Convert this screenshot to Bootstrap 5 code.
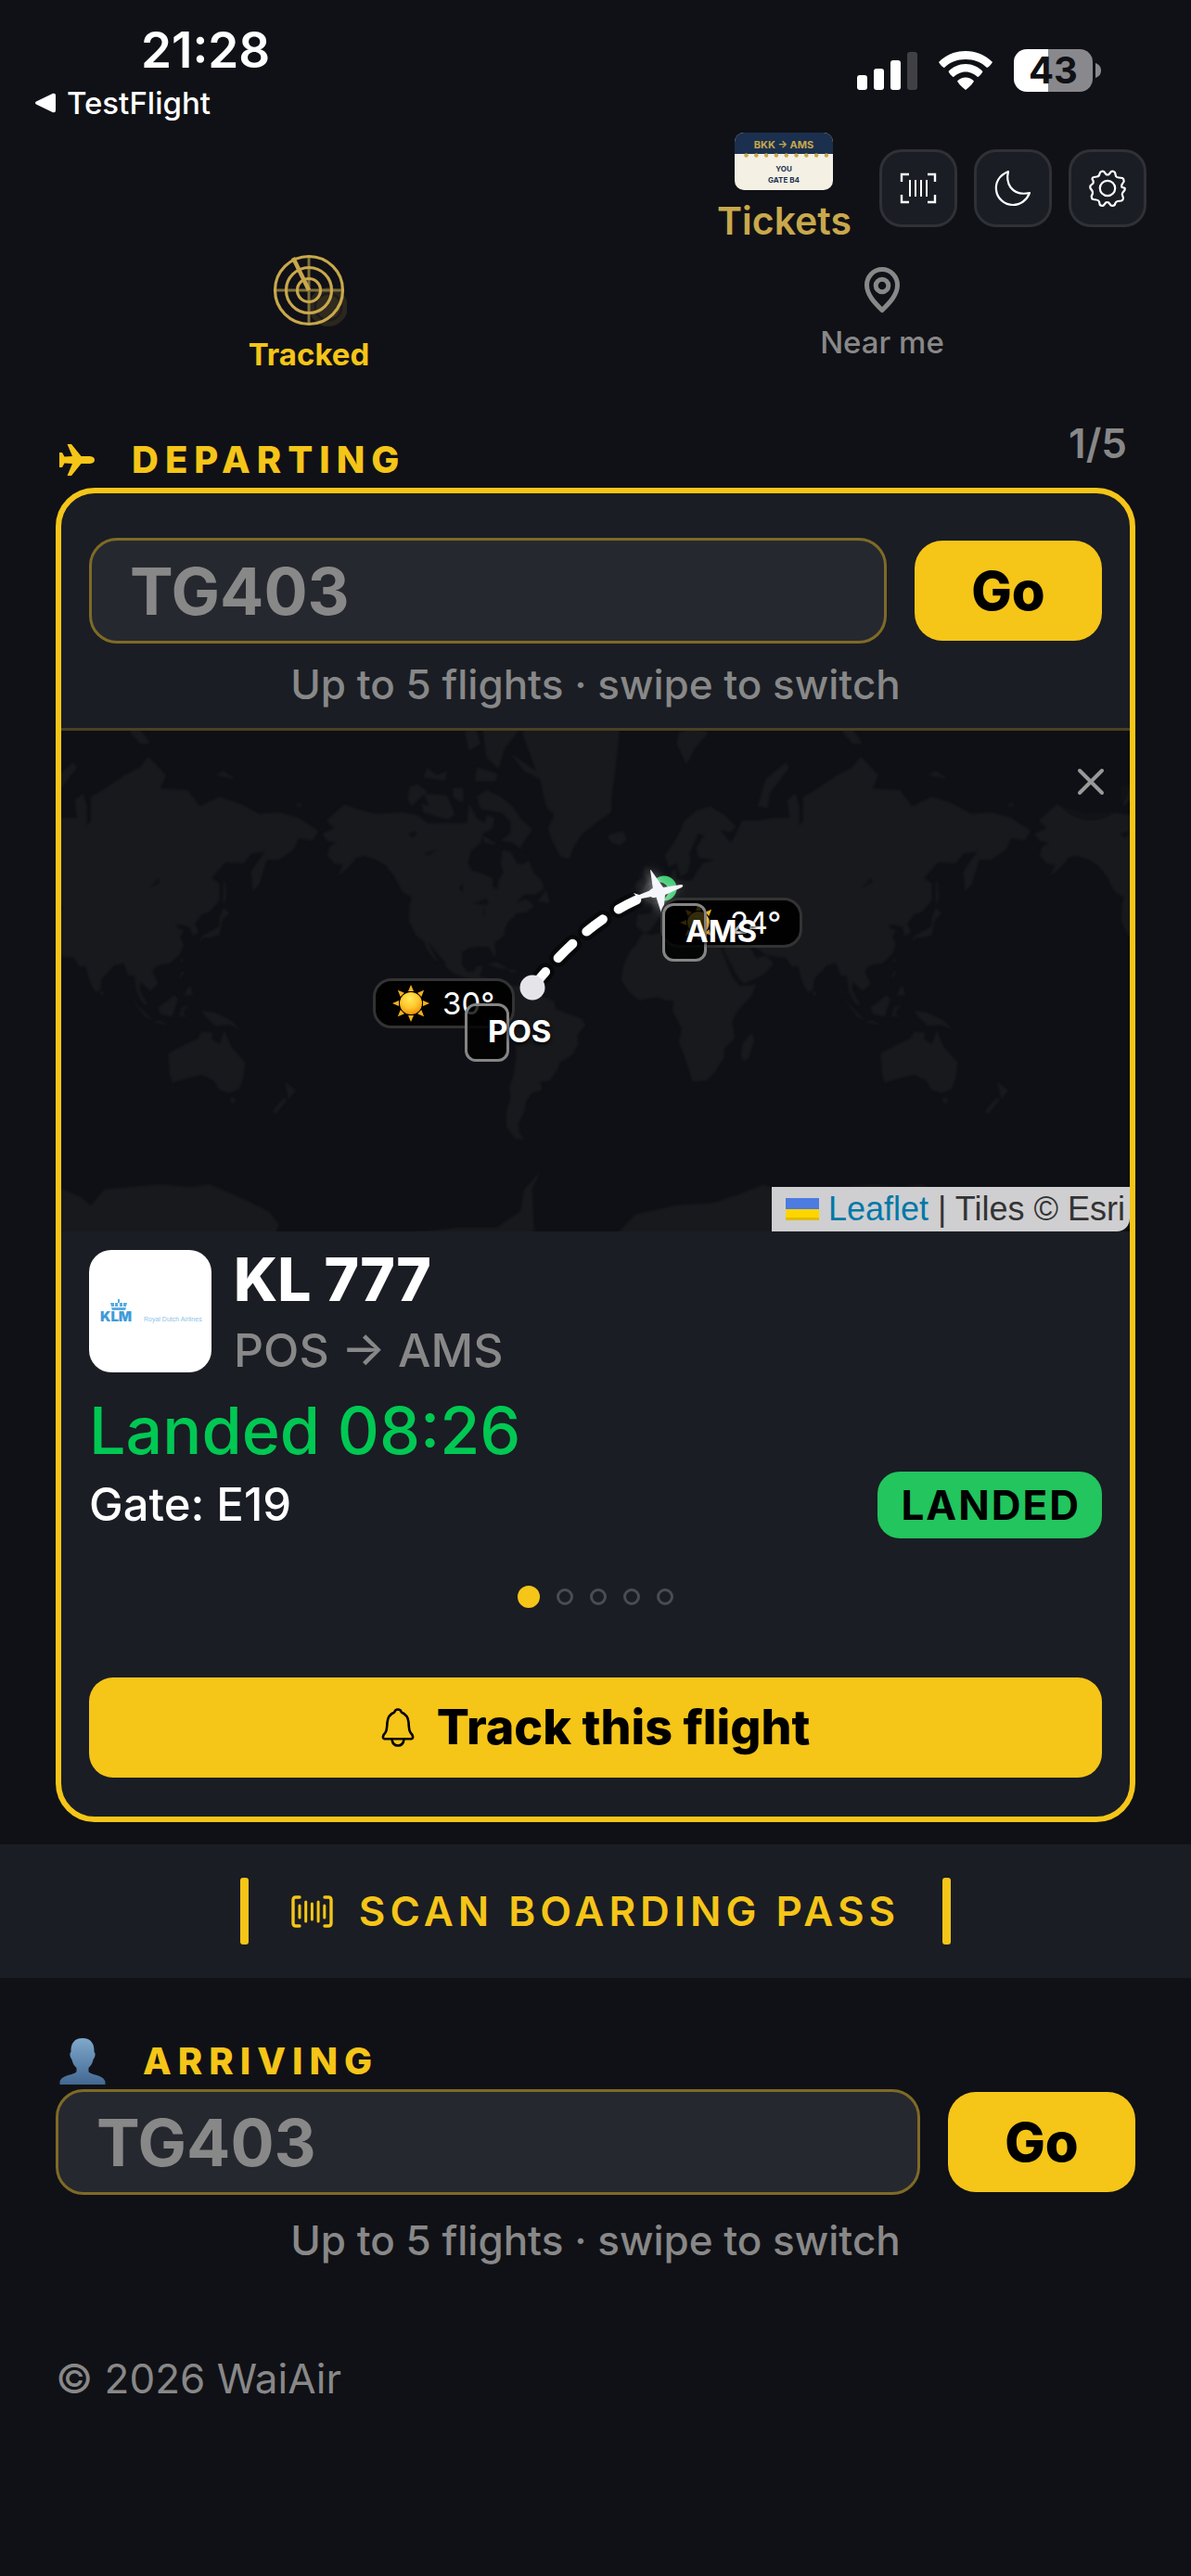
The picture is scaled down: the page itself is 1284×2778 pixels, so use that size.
<!DOCTYPE html>
<html lang="en">
<head>
<meta charset="utf-8">
<meta name="viewport" content="width=device-width, initial-scale=1">
<title>WaiAir</title>
<link href="https://cdn.jsdelivr.net/npm/bootstrap@5.3.0/dist/css/bootstrap.min.css" rel="stylesheet">
<style>
:root{--gold:#f5c518;--gold-soft:#c9a84c;--page:#101116;--panel:#1a1d24;--field:#25282f;--dim:#888}
body{background:var(--page);color:#fff;font-family:Inter,"Liberation Sans",sans-serif;font-size:44px;font-weight:500;line-height:60px;min-height:100vh}
svg{display:block;flex:none}
.text-dim{color:var(--dim)}
.text-gold{color:var(--gold)}
.status-bar{padding:24px 97px 0 38px}
.status-clock{font-size:53px;font-weight:600;padding-left:114px}
.status-back{font-size:33px;line-height:54px;gap:12px}
.status-icons{padding-top:29px;gap:23px}
.battery{gap:3px}
.battery-level{width:85px;height:46px;border-radius:14px;background:linear-gradient(90deg,#fff 37px,#89898d 37px);color:var(--page);font-size:40px;font-weight:700;line-height:46px}
.top-actions{padding:5px 48px 0;gap:18px}
.tickets-btn,.view-tab.active{color:var(--gold-soft)}
.tickets-btn{font-size:41px;font-weight:600;line-height:48px;gap:9px;margin-right:12px}
.tickets-btn:hover{color:var(--gold-soft)}
.round-btn{width:84px;height:84px;border:3px solid #303136;border-radius:24px;background:var(--panel);color:#fff}
.view-tabs{padding:10px 24px 0}
.view-tab,.view-tab:hover{flex:1;gap:8px;font-size:33px;font-weight:500;line-height:40px;color:var(--dim)}
.view-tab.active{font-weight:700;color:var(--gold)}
.flights{padding:0 60px}
.section-head{margin-top:52px}
.section-title{font-size:40px;font-weight:800;letter-spacing:7px;line-height:60px;gap:40px;padding-left:4px;margin:0}
.flight-count{font-size:44px;font-weight:600;line-height:48px;padding:0 9px 24px 0}
.flight-card{border:6px solid var(--gold);border-radius:42px;background:var(--panel);overflow:hidden}
.card-part{padding:0 30px}
.card-search{padding-top:48px;padding-bottom:17px;border-bottom:3px solid #4a4023}
.search-row{gap:30px}
.flight-input,.flight-input:focus{height:114px;border:3px solid #7f6a26;border-radius:30px;background:var(--field);color:#fff;font-size:70px;font-weight:700;padding:0 41px;box-shadow:none}
.flight-input::placeholder{color:var(--dim);opacity:1}
.gold-btn,.gold-btn:hover{height:108px;background:var(--gold);color:#000;border:0;border-radius:26px;font-weight:800}
.go-btn{width:202px;flex:none;border-radius:30px;font-size:58px}
.search-hint{font-size:44px;margin-top:14px}
.route-map{height:540px;background:#0f1015}
.map-close{position:absolute;top:13px;right:0;width:84px;height:84px;border-radius:50%;background:#0f1015aa;color:#999}
.weather-chip{position:absolute;height:54px;width:153px;border:3px solid #333;border-radius:20px;background:#000000ee;font-size:33px;font-weight:400;line-height:48px;padding-left:18px;gap:14px}
.airport-pin{position:absolute;width:48px;height:63px;border:3px solid #858585;border-radius:12px;background:#000000cc;font-size:33px;font-weight:700;line-height:55px;padding-left:22px;text-shadow:0 2px 4px #000}
.chip-pos{left:calc(50% - 240px);top:267px}
.pin-pos{left:calc(50% - 141px);top:294px}
.chip-ams{left:calc(50% + 70px);top:180px}
.pin-ams{left:calc(50% + 72px);top:186px}
.map-credit{position:absolute;right:0;bottom:0;height:48px;padding:0 5px 0 15px;background:#cfcfd1;color:#333;border-bottom-right-radius:14px;font:36px/46px "Liberation Sans",Arial,sans-serif}
.map-credit a{color:#0078a8;text-decoration:none;margin-left:10px}
.airline-logo{width:132px;height:132px;border-radius:24px;background:#fff;margin-top:7px}
.card-details{padding-top:13px;padding-bottom:42px}
.flight-id{gap:24px}
.flight-number{font-size:64px;font-weight:800;line-height:77px;margin:0}
.flight-route{font-size:50px;line-height:77px}
.flight-state{font-size:70px;line-height:88px;color:#00c853;margin-top:4px}
.flight-gate{font-size:49px}
.state-badge{height:72px;border-radius:24px;background:#22c55e;color:#000;font-size:44px;font-weight:700;letter-spacing:2px;line-height:72px;padding:0 23px 0 25px}
.pager{gap:18px;margin:51px 0 75px}
.pager-dot{width:18px;height:18px;border:3px solid #4b4c51;border-radius:50%;padding:0;background:none}
.pager-dot.active{width:24px;height:24px;background:var(--gold);border-color:var(--gold)}
.track-btn{font-size:52px;gap:24px}
.scan-band{height:144px;margin-top:24px;background:var(--panel);border:0;gap:46px}
.scan-text{font-weight:600;letter-spacing:5px;gap:28px;color:var(--gold)}
.scan-edge{width:9px;height:72px;border-radius:3px;background:var(--gold)}
.arriving-title{margin-top:60px}
.hint-late{margin-top:19px}
.page-foot{margin-top:89px;padding-bottom:60px;font-weight:400;font-size:44px}
</style>
</head>
<body>
<svg width="0" height="0" class="position-absolute" aria-hidden="true">
  <defs>
    <radialGradient id="sunFill" cx=".45" cy=".3" r=".7"><stop offset="0" stop-color="#ffe95c"/><stop offset=".6" stop-color="#fdc52a"/><stop offset="1" stop-color="#f0910f"/></radialGradient>
    <linearGradient id="bustFill" x1="0" y1="0" x2="0" y2="1"><stop offset="0" stop-color="#7fa8cb"/><stop offset="1" stop-color="#426892"/></linearGradient>
    <symbol id="sun" viewBox="0 0 40 40"><g fill="#f6b21b"><path id="ray" d="M20 0l3 7h-6z"/><use href="#ray" transform="rotate(45 20 20)"/><use href="#ray" transform="rotate(90 20 20)"/><use href="#ray" transform="rotate(135 20 20)"/><use href="#ray" transform="rotate(180 20 20)"/><use href="#ray" transform="rotate(225 20 20)"/><use href="#ray" transform="rotate(270 20 20)"/><use href="#ray" transform="rotate(315 20 20)"/></g><circle cx="20" cy="20" r="12" fill="url(#sunFill)"/></symbol>
  </defs>
</svg>

<div class="status-bar d-flex justify-content-between align-items-start">
  <div>
    <div class="status-clock">21:28</div>
    <div class="status-back d-flex align-items-center">
      <svg width="22" height="22" viewBox="0 0 22 22" fill="#fff"><path d="M1 9.500 19 .8Q22 0 22 3v16q0 3-3 2.200L1 12.500Q-1 11 1 9.500z"/></svg>
      <span>TestFlight</span>
    </div>
  </div>
  <div class="status-icons d-flex align-items-center">
    <svg width="65" height="42" viewBox="0 0 65 42" fill="#fff"><rect y="26" width="11" height="16" rx="3"/><rect x="18" y="19" width="11" height="23" rx="3"/><rect x="36" y="10" width="11" height="32" rx="3"/><rect x="54" y="1" width="11" height="41" rx="3" fill="#404045"/></svg>
    <svg width="58" height="42" viewBox="0 0 58 42" fill="#fff"><path d="M29 0C18 0 8 4 0 12q3 5 6 6C12 12 20 9 29 9s17 3 23 9q3-1 6-6C50 4 40 0 29 0z"/><path d="M29 14c-7 0-14 3-18.500 8 2 4 5 6 5.500 6 3-3 8-5.500 13-5.500S39 25 42 28c.5 0 3.500-2 5.500-6C43 17 36 14 29 14z"/><path d="M29 28.500c-3.500 0-6.500 1.500-9 4 3 5 7 8 9 9.500 2-1.500 6-4.500 9-9.500-2.500-2.500-5.500-4-9-4z"/></svg>
    <div class="battery d-flex align-items-center">
      <div class="battery-level text-center">43</div>
      <svg width="6" height="16" viewBox="0 0 6 16" fill="#89898d"><path d="M0 0c5 2 6 5 6 8s-1 6-6 8z"/></svg>
    </div>
  </div>
</div>

<header class="top-actions d-flex justify-content-end align-items-center">
  <button type="button" class="tickets-btn btn border-0 p-0 d-flex flex-column align-items-center">
    <svg width="106" height="62" viewBox="0 0 106 62"><clipPath id="tk"><rect width="106" height="62" rx="10"/></clipPath><g clip-path="url(#tk)"><rect width="106" height="62" fill="#f4f0e4"/><rect width="106" height="23" fill="#1b304e"/></g><path d="M12.500 24.500h90" stroke="#c9a84c" stroke-width="4.500" stroke-linecap="round" stroke-dasharray="0 10.800"/><g font-family="Inter" font-weight="700" text-anchor="middle"><text x="53" y="17" font-size="11" fill="#c9a84c">BKK → AMS</text><g font-size="8" fill="#1b304e"><text x="53" y="42">YOU</text><text x="53" y="54">GATE B4</text></g></g></svg>
    <span>Tickets</span>
  </button>
  <button type="button" class="round-btn btn p-0 d-flex align-items-center justify-content-center" aria-label="Scan barcode">
    <svg width="40" height="34" viewBox="0 0 40 34" fill="none" stroke="#fff" stroke-width="2.400"><path d="M2 10V2h8M30 2h8v8M38 24v8h-8M10 32H2v-8"/><path d="M11 8v18M17 8v18M23 8v18M29 8v18" stroke-width="2"/></svg>
  </button>
  <button type="button" class="round-btn btn p-0 d-flex align-items-center justify-content-center" aria-label="Dark mode">
    <svg width="40" height="40" viewBox="0 0 40 40" fill="none" stroke="#fff" stroke-width="2.200" stroke-linejoin="round"><path d="M15 2C5 6 1 14 2 22c1 9 9 16 18 16 8 0 15-5 18-13-9 2-16 0-20.500-6C14 14 13.500 8 15 2z"/></svg>
  </button>
  <button type="button" class="round-btn btn p-0 d-flex align-items-center justify-content-center" aria-label="Settings">
    <svg width="40" height="40" viewBox="0 0 40 40" fill="none" stroke="#fff" stroke-width="2.200" stroke-linejoin="round"><path d="M12 3q2-2 4-1l2.500 3q1.500 1 3 0L24 2q2-1 4 1l1 4q1 1.500 3 1.500l4 .5q2 1 1.500 4l-2 3q-.5 2 0 3l3 .8Q39 20 38.500 22l-2 2.500q-1 1.500-.5 3l1 3q0 2-2 3l-4 .5q-2 .5-2.500 2l-.8 2q-2 1.500-4 .5l-2.500-3q-1.500-1-3 0l-2.500 3q-2 1-4-.7l-.7-3.300q-1-2-3-2l-3.500-.5q-2-1-1.700-3.500l1.200-3q0-2-.7-3L1.500 20q-.5-2 .3-3l2.400-2q1-1.500.3-3L3.500 10q.3-2 2-2l3-.5Q11 7 11.300 5z"/><circle cx="20" cy="20" r="8.200"/></svg>
  </button>
</header>

<nav class="view-tabs d-flex align-items-center" aria-label="Views">
  <button type="button" class="view-tab active btn border-0 p-0 d-flex flex-column align-items-center">
    <svg width="82" height="82" viewBox="0 0 82 82" fill="none" stroke="#c9a84c"><g stroke="none"><circle cx="62" cy="59" r="21" fill="#2b271e"/><circle cx="62" cy="59" r="15.500" fill="#1d1b1a"/><circle cx="62" cy="59" r="13" fill="#302a1f"/></g><path d="M41 4v74M4 41h74" stroke="#80703a" stroke-width="3"/><g stroke-width="3.200"><circle cx="41" cy="41" r="36.500"/><circle cx="41" cy="41" r="24.500"/><circle cx="41" cy="41" r="12.500"/></g><path d="M24 6l17 35" stroke-width="4.500"/></svg>
    <span>Tracked</span>
  </button>
  <button type="button" class="view-tab btn border-0 p-0 d-flex flex-column align-items-center">
    <svg width="56" height="56" viewBox="0 0 56 56" fill="none" stroke="#888" stroke-width="5"><path d="M28 49.500C20 41.500 11.500 33 11.500 22.500a16.500 17 0 0 1 33 0C44.500 33 36 41.500 28 49.500z" stroke-linejoin="round"/><circle cx="28" cy="23" r="6.800"/></svg>
    <span>Near me</span>
  </button>
</nav>

<main>
  <section class="flights">
    <div class="section-head d-flex justify-content-between align-items-end">
      <h2 class="section-title d-flex align-items-center text-gold">
        <svg width="38" height="34" viewBox="0 0 38 34" fill="#f5c518"><path d="M8.500 0h4.500l10.500 13H33q5 .5 5 4t-5 4h-9.500L13 34H8.500L14 21l-8.500-.5L3 25H0V9h3l2.500 4.500L14 13z"/></svg>
        DEPARTING
      </h2>
      <div class="flight-count text-dim">1/5</div>
    </div>

    <article class="flight-card">
      <div class="card-part card-search">
        <form class="search-row d-flex align-items-center" onsubmit="return false">
          <input class="flight-input form-control" type="text" placeholder="TG403" aria-label="Departing flight number">
          <button type="submit" class="gold-btn go-btn btn p-0">Go</button>
        </form>
        <div class="search-hint text-center text-dim">Up to 5 flights · swipe to switch</div>
      </div>

      <div class="route-map position-relative overflow-hidden">
        <svg width="100%" height="540" viewBox="0 0 1152 540" preserveAspectRatio="xMidYMid slice" aria-label="Route from POS to AMS">
          <defs><filter id="soft" color-interpolation-filters="sRGB"><feGaussianBlur stdDeviation="1"/></filter><filter id="glow" x="-100%" y="-100%" width="300%" height="300%"><feGaussianBlur stdDeviation="6"/></filter><path id="land"/><path id="lakes"/></defs>
          <g filter="url(#soft)">
            <g fill="#18191c"><use href="#land" x="-768"/><use href="#land"/><use href="#land" x="768"/></g>
            <g fill="#101116"><use href="#lakes" x="-768"/><use href="#lakes"/><use href="#lakes" x="768"/></g>
          </g>
          <circle cx="650" cy="170" r="13.500" fill="#3dcb72"/>
          <g fill="none" stroke-linecap="round" stroke-dasharray="22 20"><path d="M508 277Q573 195 645 173" stroke="#07080a" stroke-width="19"/><path d="M508 277Q573 195 645 173" stroke="#fff" stroke-width="10"/></g>
          <circle cx="508" cy="277" r="13.500" fill="#e4e4e9"/>
          <g><path d="M635 150l14 20 20-4-16 10-3 22-10-19-22 1 16-8z" fill="#fff" opacity=".55" filter="url(#glow)"/><path d="M635 150q1 0 2 2l12 17 19-3q4 0 1 3l-18 8-2 21q-1 2-2-1l-6-19-15 3-7 4 2-5-4-5 6 2 15-6z" fill="#f5f6fb"/></g>
        </svg>
        <div class="weather-chip chip-pos d-flex align-items-center"><svg width="40" height="40"><use href="#sun"/></svg><span>30°</span></div>
        <div class="airport-pin pin-pos">POS</div>
        <div class="weather-chip chip-ams d-flex align-items-center"><svg width="40" height="40"><use href="#sun"/></svg><span>24°</span></div>
        <div class="airport-pin pin-ams">AMS</div>
        <button type="button" class="map-close btn border-0 p-0 d-flex align-items-center justify-content-center" aria-label="Close map">
          <svg width="30" height="30" viewBox="0 0 30 30" stroke="#999" stroke-width="4" stroke-linecap="round"><path d="M3 3l24 24M27 3L3 27"/></svg>
        </button>
        <div class="map-credit d-flex align-items-center text-nowrap">
          <svg width="36" height="24" viewBox="0 0 36 24"><path d="M0 0h36v12H0z" fill="#4c7be1"/><path d="M0 12h36v9H0z" fill="#ffd500"/><path d="M0 21h36v3H0z" fill="#e0bc00"/></svg>
          <a href="#">Leaflet</a><span>&nbsp;| Tiles © Esri</span>
        </div>
      </div>

      <div class="card-part card-details">
        <div class="flight-id d-flex align-items-start">
          <svg class="airline-logo" viewBox="0 0 132 132" role="img" aria-label="KLM Royal Dutch Airlines"><g fill="#5aabe0"><path d="M24 62h16l-1 3H25zM23 57h4v4h-3zM28 57h3v4h-3zM33 57h3v4h-3zM37 57h4l-1 4h-3zM31 53h2v4h-2z"/><text x="12" y="77" font-family="Inter" font-size="15" font-weight="900" fill="#409bd9">KLM</text><text x="59" y="77" font-family="Liberation Sans" font-size="7" fill="#8fc3e8">Royal Dutch Airlines</text></g></svg>
          <div>
            <h3 class="flight-number">KL 777</h3>
            <div class="flight-route text-dim">POS → AMS</div>
          </div>
        </div>
        <div class="flight-state">Landed 08:26</div>
        <div class="d-flex justify-content-between align-items-center">
          <div class="flight-gate">Gate: E19</div>
          <span class="state-badge">LANDED</span>
        </div>
        <div class="pager d-flex justify-content-center align-items-center">
          <button type="button" class="pager-dot active" aria-label="Flight 1"></button>
          <button type="button" class="pager-dot" aria-label="Flight 2"></button>
          <button type="button" class="pager-dot" aria-label="Flight 3"></button>
          <button type="button" class="pager-dot" aria-label="Flight 4"></button>
          <button type="button" class="pager-dot" aria-label="Flight 5"></button>
        </div>
        <button type="button" class="gold-btn track-btn btn w-100 p-0 d-flex align-items-center justify-content-center">
          <svg width="36" height="42" viewBox="0 0 36 42" fill="none" stroke="#000" stroke-width="2.600" stroke-linejoin="round"><path d="M18 1.500q-3 0-3.800 3Q7 7.500 6.500 15.500C6 24 5.500 26 2.500 29q-1.500 4 1 4.300h29q2.500-.3 1-4.300c-3-3-3.500-5-4-13.500Q29 7.500 21.800 4.500q-.8-3-3.800-3z"/><path d="M11.500 34q1 6.500 6.500 6.500t6.500-6.500"/></svg>
          Track this flight
        </button>
      </div>
    </article>
  </section>

  <button type="button" class="scan-band w-100 d-flex align-items-center justify-content-center">
    <span class="scan-edge"></span>
    <span class="scan-text d-flex align-items-center">
      <svg width="45" height="35" viewBox="0 0 45 35" fill="none" stroke="#f5c518" stroke-width="3.400" stroke-linecap="round"><path d="M9 2H5Q2 2 2 5v25q0 3 3 3h4M36 2h4q3 0 3 3v25q0 3-3 3h-4"/><path d="M9 11v13M15.700 7v21M22.400 9v17M29.100 7v21M35.800 11v13" stroke-width="3"/></svg>
      SCAN BOARDING PASS
    </span>
    <span class="scan-edge"></span>
  </button>

  <section class="flights">
    <h2 class="section-title arriving-title d-flex align-items-center text-gold">
      <svg width="50" height="50" viewBox="0 0 50 50" fill="url(#bustFill)"><path d="M25 0c9 0 13 6 12.500 15 2 1 1 6-1 8-1 5-3 7-5 9v4c2 4 16 3 18 11v3H.5v-3c2-8 16-7 18-11v-4c-2-2-4-4-5-9-2-2-3-7-1-8C12 6 16 0 25 0z"/></svg>
      ARRIVING
    </h2>
    <form class="search-row d-flex align-items-center" onsubmit="return false">
      <input class="flight-input form-control" type="text" placeholder="TG403" aria-label="Arriving flight number">
      <button type="submit" class="gold-btn go-btn btn p-0">Go</button>
    </form>
    <div class="search-hint hint-late text-center text-dim">Up to 5 flights · swipe to switch</div>
  </section>
</main>

<footer class="flights page-foot text-dim">© 2026 WaiAir</footer>

<script src="https://cdn.jsdelivr.net/npm/bootstrap@5.3.0/dist/js/bootstrap.bundle.min.js"></script>
<script>
// Coastlines as lon,lat pairs, drawn in Web Mercator on a world 768 units wide.
const land = [
 "-168,66 -162,67 -166,68.500 -157,71.300 -150,70.500 -141,69.700 -128,70 -120,69.500 -115,68 -108,68 -102,68 -95,68 -94,71.500 -90,69 -86,68 -85,69.500 -81,69 -82,67 -87,66 -88,64 -93,62 -94.500,59 -92,57 -88,56.500 -82,55 -82,52.500 -79.500,51.500 -79,54.500 -76.500,56.500 -78,59 -77,62.300 -73,62 -69.500,59 -66,58.800 -64,60 -61,56.500 -57,54 -56,52 -60,50 -66,50 -70,47 -65,48.500 -61,46 -65,43.700 -70,43.500 -71,42 -74,40.500 -76,37 -76,35 -81,31.500 -80.300,27 -81,25.200 -82.700,28 -84,30 -89,30 -94,29.500 -97.500,27.500 -97.500,22 -95,18.500 -91.500,18.500 -90.300,21 -87,21.400 -88.500,16 -83.500,15 -83.500,11 -81,9 -79,9.500 -77,8 -80,7.300 -83,8.300 -86,11 -88,13 -93,15 -96.500,15.800 -102,18 -105.500,20.500 -106,23 -109,26 -112.500,30 -114.700,31.700 -112,27 -109.500,23 -112,25 -115,28.500 -117,32.500 -120.500,34.500 -122.500,37.500 -124.300,40.500 -124,46 -123,49 -128,51 -131,55 -136,58.500 -141,60 -147,61 -151,60.500 -154,58.500 -158,56.500 -164,54.500 -160,56 -157.500,58.700 -162,59 -165.500,61 -164.500,63 -161,64 -166,64.500",
 "-73,78 -60,76 -67,80 -60,82 -35,83.500 -20,82 -18,80 -20,76 -22,72 -22,70 -30,68 -37,65.700 -41,63 -43.500,60 -48,61 -52,64.500 -54,67 -51,69.500 -55,71 -58,75 -66,76",
 "-85,73.500 -78,72.500 -72,71 -68,69 -62,66.700 -65,65 -68,63 -65,61.800 -72,64 -78,64.500 -73,66 -73,68.500 -78,70 -88,70.500 -90,72.500",
 "-117,73 -114,71 -118,71.500 -117,70 -105,68.700 -101,69.500 -105,72.700 -110,72.800","-125,72 -123,71 -115,73.300 -120,74.300 -124,74","-90,76.500 -80,75.700 -80,74.700 -91,74.700","-102,73.800 -97,73.800 -97,71.500 -102,72.500","-110,75.500 -105,76 -106,74.800 -117,75.200 -115,76.400","-92,81 -87,80.300 -85,77.500 -79,76.300 -76,78.500 -65,81 -62,82.700 -80,83 -91,82","-96,80 -92,81 -88,79 -94,78.300","-87,65.500 -81,64 -80,63.500 -86,64",
 "-24,65.500 -22,64 -18,63.400 -14,64.700 -16,66.400 -21,66","-59,47.700 -55,51.500 -53,47","-85,22 -80,23 -74,20 -78,20","-74,19.800 -68.500,18.700 -73,18",
 "-77,8 -72,12 -70,11.500 -62,10.700 -60,8.500 -57,6 -51,4 -50,0 -44,-2.500 -37,-5 -35,-8 -39,-13 -39,-18 -41.500,-22.500 -48,-26 -49,-29 -53,-34 -58,-34.500 -57,-38 -62,-39 -65,-42 -66,-46 -69,-50 -68.500,-53 -66,-55 -71,-54.500 -75,-51 -75,-46 -73,-41 -73.500,-37 -71.500,-32 -70,-23 -70.500,-18 -76,-14 -79,-8 -81.200,-5 -80,-2.500 -80,1 -77.500,4",
 "-6,35.800 -2,35 10,37.200 11,34 15,32.300 20,31 23,32.700 29,31 32,31.200 34,28 37,21 39.500,15.500 43,11.500 51,12 49,7 41,-2 39,-7 40.500,-14.500 35,-20 35,-24 32.500,-27 31,-30 26,-34 19,-34.500 17,-29 14.500,-22 12,-17 13.500,-10 9,-1 9.500,4 5,4.500 1,6 -8,4.500 -13.500,9 -17,14.500 -16,21 -13,27.500 -9.500,31",
 "43.500,-23 45,-25.500 47.500,-24 50.300,-15.500 49,-12 44.500,-17",
 "-9.500,38.500 -8.800,43 -1.800,43.400 -1,46 -4.500,48.300 1.500,50.200 4.500,53 8,54 8.500,57 11,57.500 10.500,54.300 14,54 19,54.500 21.500,57 24,59 30,60 22,60.500 21,63 25,65.500 22,66 17.500,61.500 18,60 16.500,56.500 13,55.500 11,59 7,58 5,61 11,65 15,68.500 21,70.300 28,71 36,69.300 41,67.300 38,66.200 33,66.800 38,64 40,65 44,68.500 52,68.500 60,69 68,69 67,72 71,73 73,71 73,67.500 75,68.500 75,72.500 81,73.500 92,75.500 100,76.500 104,77.700 113,75.500 110,73.700 124,73.500 130,71 140,72.500 150,71.500 160,69.700 170,70 180,69 190,66.500 187,64.500 180,65 177.500,62.500 170,60 164,60 162.500,57.500 160,53 156.700,51 156,57 163,62 156,61.500 152,59 143,59.300 136,55 140,53.500 140,48 135,44 131,43 127.500,39.500 129.500,36 126.500,34.500 125,38 121.500,39 118,39 119,37.500 122,37 120,34 122,31 120,26.500 115,22.500 109,21.500 106,19 109,12.500 105,9 103,11 100,13.500 99.500,9.500 104,1.500 101,3 98,9 97,16.500 94,16.500 91.500,22.500 87,21.500 80.500,15 80,10 77.500,8 74,14.500 72.500,21 69,21 66.500,25 57,26 50,30 48,30 51,25 56,26 60,22.500 55,17 45,12.700 42.500,15 39,21 35,28 34.500,31.500 36,36.500 30,36.300 26.500,38 29,41 35,42 41,41.500 38,45 40,47 35,46 33,46 30,45.500 28,43 29,41 24,40.700 24,37.500 22,36.500 19.500,41 13.500,45.500 18.500,40 16,38 12,42 9,44.300 3,43 0,39.500 -2,36.800 -5.500,36",
 "-5,50 1.300,51.200 1.500,52.700 -1.500,55 -2,57.600 -5,58.500 -6,56 -3,54 -5,52.500","-10,52 -6,52.300 -6,55 -9.500,54","52,71 57,70.700 58,73 68,76.500 66,77 56,75","12,80 11,79 16,76.800 20,78.500 27,80 20,80.500","95,80 100,79 105,79 96,81.200","138,75.500 148,75 142,76","178,71 182,71 180,71.600",
 "130,31.500 132,34 135,33.700 140,35 141.500,41 145,43.500 142,45.500 140,42 140,38.500 136,36.700 131,34.500","142,46 143.500,49 143,54 142,54","121,22.500 122,25 120,24","120,14 122,18.500 120.500,18.500","122,7 126.500,7 125,12","80,6.500 81.800,7.500 80,9.800",
 "95,5.500 106,-5.500 103,-4.500","105.500,-6.500 114.500,-8.300 110,-6","109,1 113,3.500 117,7 119,5 116,-4 110,-2.500","119.500,-5 121,1 125,1.500 121.500,-1 123,-5 121,-3","131,-1 138,-2 146,-6 150.500,-10.500 145,-8 138,-8.500 133,-4",
 "114,-22 122,-18 129,-14.800 131,-11.500 136.500,-12 136,-15 140,-17.500 142.500,-10.800 146,-19 153,-26 152,-33 150,-37.500 145,-39 140,-38 137,-34 131,-31.500 124,-33 116,-35 115,-32","145,-41 148.200,-41 147,-43.600","173,-34.500 178.500,-38 175,-41.500","173,-40.700 174,-42 168,-47 167,-45.500",
 "-180,-78 -165,-78 -150,-77 -135,-74.500 -115,-74 -100,-73.500 -80,-73.500 -68,-71 -66,-67 -58,-63.300 -62,-67 -61,-74 -75,-78 -40,-78 -25,-76 -10,-71.500 10,-70 30,-69.500 42,-68 55,-66 70,-68.500 75,-70 82,-67 95,-66.500 110,-66 125,-66.500 135,-66 150,-68.500 165,-71 170,-73 163,-78 180,-78 180,-82 -180,-82"
];
const lakes = ["47,45 53,47 51,44.500 54,40.500 52,36.700 49,38 50,41","58,44.500 61,46.500 60,44","104,51.500 109,55 110,54","-92,47 -85,48.700 -84,46.500 -88,46.500","-87,43 -86,45.700 -86,42","-125,66 -120,66.500 -122,65","-117,61.500 -110,62.500 -114,61","-99,52 -97,53.500 -97,50.500"];
const px = n => Math.round(n * 10) / 10;
function project(pair) {
  const [lon, lat] = pair.split(",").map(Number);
  const y = Math.log(Math.tan(Math.PI / 4 + lat * Math.PI / 360));
  return px(640 + lon * 768 / 360) + " " + px(300 - y * 768 / (2 * Math.PI));
}
const outline = list => list.map(p => "M" + p.split(" ").map(project).join("L") + "Z").join("");
document.getElementById("land").setAttribute("d", outline(land));
document.getElementById("lakes").setAttribute("d", outline(lakes));
</script>
</body>
</html>
